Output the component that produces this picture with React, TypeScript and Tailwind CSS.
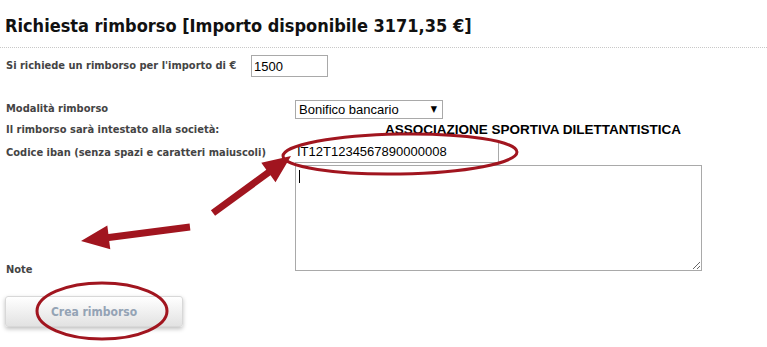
import React from "react"

const tahoma = { fontFamily: '"DejaVu Sans Condensed", "DejaVu Sans", sans-serif' }
const arial = { fontFamily: '"Liberation Sans", Arial, sans-serif' }

function Marks() {
  // red ellipses + arrows drawn over the form
  return (
    <svg className="absolute inset-0 pointer-events-none" width="767" height="347" viewBox="0 0 767 347">
      <ellipse cx="400" cy="154" rx="117" ry="20" fill="none" stroke="#a1151f" strokeWidth="3" transform="rotate(-1 400 154)" />
      <ellipse cx="102" cy="311" rx="65" ry="28" fill="none" stroke="#a1151f" strokeWidth="3" />
      <polygon
        fill="#a1151f"
        points="210.9,210.2 266.3,169.7 261.3,162.8 291,156 275.5,182.2 270.5,175.3 215.1,215.8"
      />
      <polygon
        fill="#a1151f"
        points="189.6,223.5 108.4,233.9 107.3,225.5 81,241 110.3,249.3 109.2,240.9 190.4,230.5"
      />
    </svg>
  )
}

export default function App() {
  return (
    <div className="relative w-[767px] h-[347px] bg-white overflow-hidden text-[#444]" style={tahoma}>
      <h1 className="h-[47px] pl-[5px] pt-[15px] text-[18px] font-bold leading-[22px] text-[#111]">
        Richiesta rimborso [Importo disponibile 3171,35 €]
      </h1>
      <div className="border-t border-dotted border-[#c8c8c8]" />

      {/* importo */}
      <div className="mt-[7px] flex items-center pl-[6px]">
        <span className="w-[245px] text-[11px] font-bold">Si richiede un rimborso per l'importo di €</span>
        <input
          defaultValue="1500"
          className="w-[77px] h-[22px] border border-[#a9a9a9] px-[2px] text-[13px] text-black outline-none"
          style={arial}
        />
      </div>

      {/* dettagli */}
      <div className="mt-[23px] grid grid-cols-[289px_1fr] pl-[6px] text-[11px] font-bold">
        <div className="h-[19px] flex items-center">Modalità rimborso</div>
        <div className="h-[19px] relative w-[148px]">
          <div
            className="h-[19px] border border-[#a9a9a9] bg-white pl-[3px] text-[13px] font-normal text-black leading-[17px]"
            style={arial}
          >
            Bonifico bancario
          </div>
          <span className="absolute right-[6px] top-[3px] text-[9px] text-black">▼</span>
        </div>

        <div className="h-[22px] flex items-center">Il rimborso sarà intestato alla società:</div>
        <div className="h-[22px] flex items-center pl-[90px] text-[13.5px] text-black" style={arial}>
          ASSOCIAZIONE SPORTIVA DILETTANTISTICA
        </div>

        <div className="h-[24px] flex items-center">Codice iban (senza spazi e caratteri maiuscoli)</div>
        <div className="h-[24px] flex items-start">
          <input
            defaultValue="IT12T1234567890000008"
            className="w-[204px] h-[22px] border border-[#a9a9a9] border-t-0 border-l-0 px-[2px] text-[13px] font-normal text-black outline-none"
            style={arial}
          />
        </div>

        <div className="self-end mb-[-5px] leading-[13px]">Note</div>
        <div className="relative h-[106px] w-[407px]">
          <textarea className="w-full h-full border border-[#a9a9a9] outline-none" />
          <span className="absolute left-[4px] top-[5px] w-[1px] h-[13px] bg-black" />
        </div>
      </div>

      {/* bottone */}
      <button
        className="mt-[25px] ml-[5px] w-[178px] h-[31px] rounded-[3px] border border-[#d8d8d8] bg-linear-to-b from-white to-[#e2e2e2] text-[12px] font-bold text-[#94a3b5] shadow-[0_2px_4px_rgba(0,0,0,0.25)]"
        style={tahoma}
      >
        Crea rimborso
      </button>

      <Marks />
    </div>
  )
}
